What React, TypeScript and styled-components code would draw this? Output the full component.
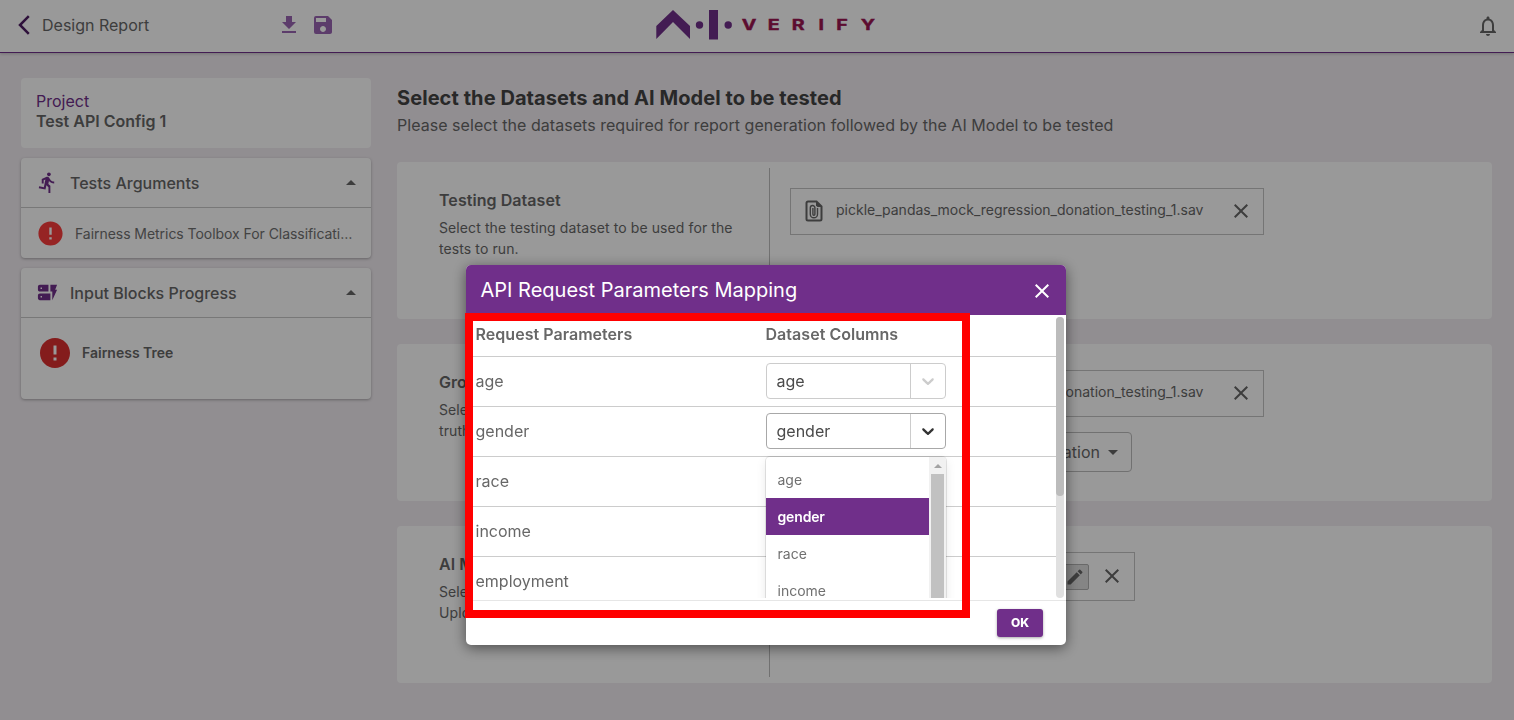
import React from 'react';
import styled, { createGlobalStyle } from 'styled-components';
import {
  MdArrowDropDown,
  MdArrowDropUp,
  MdClose,
  MdDirectionsRun,
  MdDownload,
  MdDynamicForm,
  MdEdit,
  MdError,
  MdNotificationsNone,
  MdSave,
} from 'react-icons/md';

const purple = '#702f8a';

const GlobalStyle = createGlobalStyle`
  * { box-sizing: border-box; }
  body {
    margin: 0;
    background: #f2edf2;
    color: #676767;
    font-family: Inter, "Liberation Sans", sans-serif;
    font-size: 16px;
    overflow: hidden;
  }
  svg { display: block; flex: none; }
`;

const Page = styled.div`
  height: 720px;
  overflow: hidden;
  background: #f2edf2;
`;

const Header = styled.header`
  display: grid;
  grid-template-columns: 641px 220px 1fr;
  align-items: center;
  height: 53px;
  padding: 0 14px 2px 15px;
  background: #fff;
  border-bottom: 1px solid ${purple};
  box-shadow: 0 1px 3px rgba(0, 0, 0, 0.2);
`;

const HeaderLeft = styled.div`
  display: flex;
  align-items: center;
  color: #4e1d63;
`;

const HeaderTitle = styled.div`
  width: 235px;
  margin-left: 8px;
  color: #676767;
`;

const HeaderTools = styled.div`
  display: flex;
  gap: 10px;
  color: #9a64b2;
`;

const HeaderRight = styled.div`
  display: flex;
  justify-content: flex-end;
  padding-top: 1px;
  color: #676767;
`;

const Content = styled.div`
  display: flex;
  gap: 26px;
  padding: 25px 22px 0 21px;
`;

const Sidebar = styled.aside`
  display: flex;
  flex-direction: column;
  width: 350px;
  flex: none;
`;

const ProjectCard = styled.div`
  height: 70px;
  margin-bottom: 10px;
  padding: 13px 15px;
  background: #fff;
  border-radius: 4px;
  line-height: 20px;
`;

const ProjectLabel = styled.div`
  color: ${purple};
`;

const ProjectName = styled.div`
  font-weight: 600;
`;

const Panel = styled.section<{ $height: number }>`
  height: ${(p) => p.$height}px;
  margin-bottom: 10px;
  background: #fff;
  border-radius: 4px;
  box-shadow: 0 1px 3px rgba(0, 0, 0, 0.3);
`;

const PanelHead = styled.div`
  display: flex;
  align-items: center;
  height: 50px;
  padding: 0 8px 0 15px;
  border-bottom: 1px solid #c8c8c8;
  font-weight: 500;
`;

const PanelIcon = styled.span`
  width: 34px;
  color: ${purple};
`;

const PanelTitle = styled.div`
  flex: 1;
`;

const PanelItem = styled.div<{ $strong?: boolean }>`
  display: flex;
  align-items: center;
  gap: ${(p) => (p.$strong ? 9 : 10)}px;
  height: ${(p) => (p.$strong ? 70 : 51)}px;
  padding: 0 18px 0 ${(p) => (p.$strong ? 16 : 15)}px;
  font-size: 14px;
  font-weight: ${(p) => (p.$strong ? 600 : 400)};
  color: ${(p) => (p.$strong ? '#676767' : '#707070')};
  svg { color: ${(p) => (p.$strong ? '#dc2f2f' : '#fa3c3c')}; }
`;

const ItemText = styled.div<{ $spacing?: number }>`
  min-width: 0;
  margin-bottom: 1px;
  letter-spacing: ${(p) => p.$spacing ?? 0}px;
  white-space: nowrap;
  overflow: hidden;
  text-overflow: ellipsis;
`;

const Main = styled.main`
  flex: 1;
  min-width: 0;
`;

const Title = styled.h1`
  margin: 7px 0 0;
  font-size: 20px;
  line-height: 26px;
  font-weight: 700;
  letter-spacing: 0.07px;
  color: #444;
`;

const Subtitle = styled.p`
  margin: 4px 0 26px;
  line-height: 21px;
  letter-spacing: 0.04px;
`;

const Card = styled.section`
  display: flex;
  height: 157px;
  margin-bottom: 25px;
  padding: 6px 0;
  background: #fff;
  border-radius: 4px;
`;

const CardInfo = styled.div`
  width: 373px;
  padding: 22px 30px 0 42px;
  border-right: 1px solid #bdbdbd;
`;

const CardTitle = styled.h2`
  margin: 0 0 6px;
  font-size: 16px;
  line-height: 21px;
  font-weight: 600;
  letter-spacing: 0.06px;
`;

const CardText = styled.p`
  margin: 0;
  font-size: 14px;
  line-height: 21px;
  letter-spacing: 0.1px;
`;

const CardBody = styled.div`
  display: flex;
  flex-direction: column;
  align-items: flex-start;
  gap: 15px;
  padding: 20px 0 0 20px;
`;

const FileBox = styled.div<{ $width: number; $height: number }>`
  display: flex;
  align-items: center;
  width: ${(p) => p.$width}px;
  height: ${(p) => p.$height}px;
  padding: 0 10px 1px 14px;
  border: 1px solid #c4c4c4;
  font-size: 14px;
`;

const FileName = styled.div`
  flex: 1;
  margin: 0 0 3px 13px;
  white-space: nowrap;
`;

const EditButton = styled.button`
  display: flex;
  align-items: center;
  justify-content: center;
  width: 28px;
  height: 26px;
  margin: 1px 11px 0 0;
  padding: 0;
  background: #dedede;
  border: 1px solid #b0b0b0;
  border-radius: 2px;
  color: #676767;
`;

const TruthSelect = styled.div`
  display: flex;
  align-items: center;
  justify-content: flex-end;
  gap: 1px;
  width: 342px;
  height: 40px;
  padding-right: 6px;
  border: 1px solid #bdbdbd;
  border-radius: 4px;
`;

const Overlay = styled.div`
  position: fixed;
  inset: 0;
  background: rgba(0, 0, 0, 0.4);
`;

const Modal = styled.div`
  position: absolute;
  left: 466px;
  top: 265px;
  display: flex;
  flex-direction: column;
  width: 600px;
  height: 380px;
  background: #fff;
  border-radius: 5px;
  box-shadow: 0 3px 14px rgba(0, 0, 0, 0.5);
`;

const ModalHead = styled.div`
  display: flex;
  align-items: center;
  justify-content: space-between;
  height: 50px;
  padding: 0 12px 0 14.5px;
  background: ${purple};
  border-radius: 5px 5px 0 0;
  color: #fff;
  font-size: 20px;
  svg { margin-top: 2px; }
`;

const ModalBody = styled.div`
  position: relative;
  display: flex;
  height: 283px;
  overflow: hidden;
`;

const Table = styled.div`
  flex: 1;
`;

const TableRow = styled.div<{ $head?: boolean }>`
  display: grid;
  grid-template-columns: 290px 1fr;
  align-items: center;
  height: ${(p) => (p.$head ? 42 : 50)}px;
  padding: 0 0 ${(p) => (p.$head ? 4 : 1)}px 9.5px;
  border-bottom: 1px solid #ccc;
  font-weight: ${(p) => (p.$head ? 600 : 400)};
  letter-spacing: ${(p) => (p.$head ? 0.04 : 0)}px;
`;

const ScrollTrack = styled.div`
  width: 8px;
  height: 281px;
  margin: 2px 2px 0 0;
  background: #e0e0e0;
  border-radius: 4px;
`;

const ScrollThumb = styled.div`
  height: 179px;
  background: #bcbcbc;
  border-radius: 4px;
`;

const Select = styled.div<{ $active?: boolean }>`
  display: flex;
  width: 180px;
  height: 36px;
  margin-left: 0.5px;
  border: 1px solid ${(p) => (p.$active ? '#a8a8a8' : '#ccc')};
  border-radius: 4px;
`;

const SelectValue = styled.div`
  flex: 1;
  padding-left: 9.5px;
  line-height: 34px;
  color: #4a4a4a;
`;

const SelectArrow = styled.div<{ $active?: boolean }>`
  display: flex;
  align-items: center;
  justify-content: center;
  width: 35px;
  border-left: 1px solid #ccc;
  color: ${(p) => (p.$active ? '#333' : '#ccc')};
`;

const Menu = styled.div`
  position: absolute;
  left: 300px;
  top: 142px;
  display: flex;
  width: 180px;
  height: 300px;
  background: #fff;
  border-radius: 4px;
  box-shadow: 0 0 0 1px rgba(0, 0, 0, 0.1), 0 4px 11px rgba(0, 0, 0, 0.1);
  overflow: hidden;
`;

const Options = styled.div`
  flex: 1;
  padding-top: 4px;
`;

const Option = styled.div<{ $selected?: boolean }>`
  height: 37px;
  padding-left: 11.5px;
  font-size: 14px;
  line-height: 38px;
  font-weight: ${(p) => (p.$selected ? 600 : 400)};
  letter-spacing: ${(p) => (p.$selected ? -0.15 : 0)}px;
  background: ${(p) => (p.$selected ? purple : 'transparent')};
  color: ${(p) => (p.$selected ? '#fff' : '#707070')};
`;

const MenuScroll = styled.div`
  display: flex;
  flex-direction: column;
  align-items: center;
  width: 17px;
  padding-top: 7px;
  background: #f1f1f1;
`;

const MenuThumb = styled.div`
  flex: 1;
  width: 13px;
  margin-top: 6px;
  background: #c1c1c1;
`;

const ModalFoot = styled.div`
  display: flex;
  justify-content: flex-end;
  margin-top: 2px;
  padding: 8px 23px 0 0;
  border-top: 1px solid #e6e6e6;
`;

const OkButton = styled.button`
  width: 46px;
  height: 28px;
  padding: 0 0 1px;
  background: ${purple};
  border: 0;
  border-radius: 3px;
  box-shadow: 0 1px 3px rgba(0, 0, 0, 0.35);
  color: #fff;
  font: 800 12px Inter, "Liberation Sans", sans-serif;
`;

const Highlight = styled.div`
  position: absolute;
  left: 465px;
  top: 313px;
  width: 505px;
  height: 305px;
  border: 8px solid #f00;
`;

function BackIcon() {
  return (
    <svg width="19" height="20" viewBox="0 0 19 20" fill="none" stroke="currentColor" strokeWidth="2.500">
      <path d="M13.800 1.200L5 10l8.800 8.800" />
    </svg>
  );
}

function Logo() {
  return (
    <svg width="220" height="32" viewBox="0 0 220 32" overflow="visible">
      <g fill={purple}>
        <path d="M0.300 17L17 1l17 16v13L17 13 0.300 30z" />
        <circle cx="43.500" cy="16" r="3.700" />
        <rect x="53" y="1" width="9" height="29.500" />
        <circle cx="72.200" cy="16" r="3.700" />
      </g>
      <text
        transform="translate(0 21) scale(1.400 1)"
        x="61.200 79.800 97 116 128.700 146.200"
        fill="#9b1450"
        stroke="#9b1450"
        strokeWidth="0.400"
        fontFamily="Inter, sans-serif"
        fontWeight="700"
        fontSize="14"
      >
        VERIFY
      </text>
    </svg>
  );
}

function FileIcon() {
  return (
    <svg width="18" height="22" viewBox="0 0 18 22" fill="none" stroke="currentColor">
      <path d="M11.500 1.500H3A1.500 1.500 0 0 0 1.500 3v16A1.500 1.500 0 0 0 3 20.500h12a1.500 1.500 0 0 0 1.500-1.500V6.500z" strokeWidth="2" />
      <path d="M11 1l6 6h-4.500L11 5.500z" fill="currentColor" stroke="none" />
      <path d="M12.500 8v6.200a3.600 3.600 0 0 1-7.200 0V7.800a2.300 2.300 0 0 1 4.600 0v6.400a1 1 0 0 1-2 0V8" strokeWidth="1.400" />
    </svg>
  );
}

function ArrowIcon() {
  return (
    <svg width="20" height="20" viewBox="0 0 20 20" fill="currentColor">
      <path d="M4.516 7.548c0.436-0.446 1.043-0.481 1.576 0l3.908 3.747 3.908-3.747c0.533-0.481 1.141-0.446 1.574 0 0.436 0.445 0.408 1.197 0 1.615-0.406 0.418-4.695 4.502-4.695 4.502-0.217 0.223-0.502 0.335-0.787 0.335s-0.570-0.112-0.789-0.335c0 0-4.287-4.084-4.695-4.502s-0.436-1.170 0-1.615z" />
    </svg>
  );
}

function ParamSelect({ value, active }: { value: string; active?: boolean }) {
  return (
    <Select $active={active}>
      <SelectValue>{value}</SelectValue>
      <SelectArrow $active={active}>
        <ArrowIcon />
      </SelectArrow>
    </Select>
  );
}

const fileName = 'pickle_pandas_mock_regression_donation_testing_1.sav';
const options = ['age', 'gender', 'race', 'income'];

export default function App() {
  return (
    <Page>
      <GlobalStyle />
      <Header>
        <HeaderLeft>
          <BackIcon />
          <HeaderTitle>Design Report</HeaderTitle>
          <HeaderTools>
            <MdDownload size={24} />
            <MdSave size={24} />
          </HeaderTools>
        </HeaderLeft>
        <Logo />
        <HeaderRight>
          <MdNotificationsNone size={24} />
        </HeaderRight>
      </Header>
      <Content>
        <Sidebar>
          <ProjectCard>
            <ProjectLabel>Project</ProjectLabel>
            <ProjectName>Test API Config 1</ProjectName>
          </ProjectCard>
          <Panel $height={100}>
            <PanelHead>
              <PanelIcon><MdDirectionsRun size={23} /></PanelIcon>
              <PanelTitle>Tests Arguments</PanelTitle>
              <MdArrowDropUp size={24} />
            </PanelHead>
            <PanelItem>
              <MdError size={29} />
              <ItemText $spacing={-0.05}>Fairness Metrics Toolbox For Classification</ItemText>
            </PanelItem>
          </Panel>
          <Panel $height={131}>
            <PanelHead>
              <PanelIcon><MdDynamicForm size={23} /></PanelIcon>
              <PanelTitle>Input Blocks Progress</PanelTitle>
              <MdArrowDropUp size={24} />
            </PanelHead>
            <PanelItem $strong>
              <MdError size={36} />
              <ItemText>Fairness Tree</ItemText>
            </PanelItem>
          </Panel>
        </Sidebar>
        <Main>
          <Title>Select the Datasets and AI Model to be tested</Title>
          <Subtitle>
            Please select the datasets required for report generation followed by the AI Model to be tested
          </Subtitle>
          <Card>
            <CardInfo>
              <CardTitle>Testing Dataset</CardTitle>
              <CardText>Select the testing dataset to be used for the tests to run.</CardText>
            </CardInfo>
            <CardBody>
              <FileBox $width={474} $height={47}>
                <FileIcon />
                <FileName>{fileName}</FileName>
                <MdClose size={24} />
              </FileBox>
            </CardBody>
          </Card>
          <Card>
            <CardInfo>
              <CardTitle>Ground Truth Dataset</CardTitle>
              <CardText>Select the dataset containing the ground truth data.</CardText>
            </CardInfo>
            <CardBody>
              <FileBox $width={474} $height={47}>
                <FileIcon />
                <FileName>{fileName}</FileName>
                <MdClose size={24} />
              </FileBox>
              <TruthSelect>
                donation
                <MdArrowDropDown size={24} />
              </TruthSelect>
            </CardBody>
          </Card>
          <Card>
            <CardInfo>
              <CardTitle>AI Model</CardTitle>
              <CardText>Select the AI Model to be tested.<br />Upload model</CardText>
            </CardInfo>
            <CardBody>
              <FileBox $width={345} $height={49}>
                <FileIcon />
                <FileName>Test API Config</FileName>
                <EditButton><MdEdit size={20} /></EditButton>
                <MdClose size={24} />
              </FileBox>
            </CardBody>
          </Card>
        </Main>
      </Content>
      <Overlay>
        <Modal>
          <ModalHead>
            API Request Parameters Mapping
            <MdClose size={24} />
          </ModalHead>
          <ModalBody>
            <Table>
              <TableRow $head>
                <div>Request Parameters</div>
                <div>Dataset Columns</div>
              </TableRow>
              <TableRow>
                <div>age</div>
                <ParamSelect value="age" />
              </TableRow>
              <TableRow>
                <div>gender</div>
                <ParamSelect value="gender" active />
              </TableRow>
              <TableRow><div>race</div></TableRow>
              <TableRow><div>income</div></TableRow>
              <TableRow><div>employment</div></TableRow>
            </Table>
            <ScrollTrack><ScrollThumb /></ScrollTrack>
            <Menu>
              <Options>
                {options.map((name) => (
                  <Option key={name} $selected={name === 'gender'}>{name}</Option>
                ))}
              </Options>
              <MenuScroll>
                <svg width="8" height="4" viewBox="0 0 8 4"><path d="M0 4l4-4 4 4z" fill="#a3a3a3" /></svg>
                <MenuThumb />
              </MenuScroll>
            </Menu>
          </ModalBody>
          <ModalFoot>
            <OkButton>OK</OkButton>
          </ModalFoot>
        </Modal>
        <Highlight />
      </Overlay>
    </Page>
  );
}
